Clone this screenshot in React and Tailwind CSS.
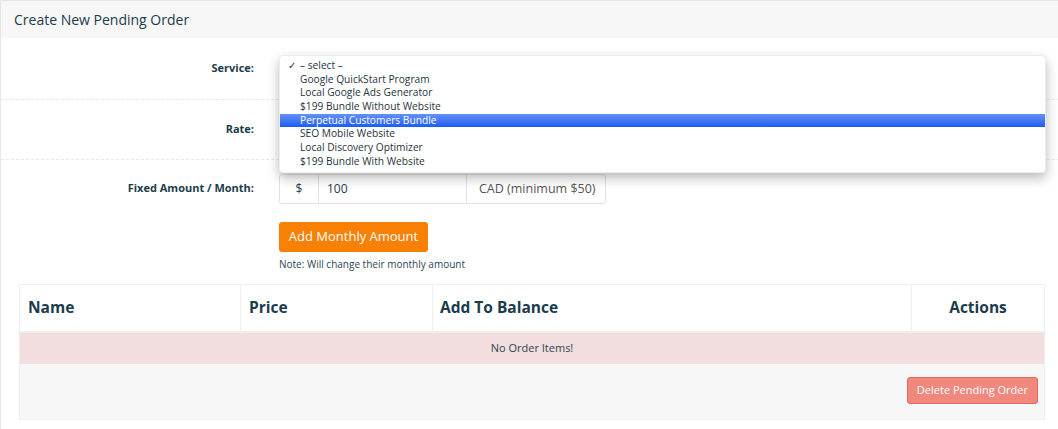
import React from 'react';

const options = [
    'Google QuickStart Program',
    'Local Google Ads Generator',
    '$199 Bundle Without Website',
    'Perpetual Customers Bundle',
    'SEO Mobile Website',
    'Local Discovery Optimizer',
    '$199 Bundle With Website',
];

export default function App() {
    return (
        <div className="w-[1058px] h-[429px] overflow-hidden bg-white text-[#1b3c4b]" style={{ fontFamily: '"Open Sans", sans-serif' }}>
            <div className="w-[1080px] border-l border-t border-[#e6e6e6] h-full">
                {/* Panel header */}
                <div className="h-[37px] bg-[#f7f7f7] flex items-center pl-[13px] text-[14px]">
                    Create New Pending Order
                </div>

                {/* Form */}
                <div className="relative">
                    <div className="flex items-center h-[62px] border-b border-dashed border-[#e8e8e8]">
                        <div className="w-[256px] pr-[3px] text-right text-[11px] font-bold">Service:</div>
                    </div>
                    <div className="flex items-center h-[60px] border-b border-dashed border-[#e8e8e8]">
                        <div className="w-[256px] pr-[3px] text-right text-[11px] font-bold">Rate:</div>
                        <div className="ml-[22px] w-[766px] h-[29px] border border-[#e3e3e3] rounded-[3px]" />
                    </div>

                    <div className="flex pt-[14px]">
                        <div className="w-[256px] pr-[3px] pt-[6px] text-right text-[11px] font-bold">Fixed Amount / Month:</div>
                        <div className="ml-[22px]">
                            <div className="flex h-[30px] w-[327px] border border-[#e3e3e3] rounded-[3px] text-[12px]">
                                <div className="w-[39px] flex items-center justify-center border-r border-[#e3e3e3]">$</div>
                                <div className="w-[148px] flex items-center pl-[8px] border-r border-[#e3e3e3]">100</div>
                                <div className="flex-1 flex items-center pl-[12px] text-[12.5px] text-[#555]">CAD (minimum $50)</div>
                            </div>
                            <button className="mt-[18px] h-[30px] w-[149px] rounded-[3px] bg-[#f88004] text-white text-[13px]">
                                Add Monthly Amount
                            </button>
                            <div className="mt-[5px] text-[10px] text-[#2b4753]">Note: Will change their monthly amount</div>
                        </div>
                    </div>

                    {/* Open select dropdown */}
                    <div className="absolute left-[278px] top-[17px] w-[767px] rounded-[4px] bg-white border border-[#ececec] shadow-[0_5px_12px_rgba(0,0,0,0.28)] py-[3px] text-[10.2px] font-medium text-[#1f3440]">
                        <div className="h-[13.7px] leading-[13.7px] flex">
                            <span className="w-[20px] pl-[8px] text-[10px]">✓</span>
                            <span>– select –</span>
                        </div>
                        {options.map((o, i) => (
                            <div
                                key={o}
                                className={`h-[13.7px] leading-[13.7px] pl-[20px] ${i === 3 ? 'bg-gradient-to-b from-[#6690f6] to-[#1a5cf1] text-white' : ''}`}
                            >
                                {o}
                            </div>
                        ))}
                    </div>
                </div>

                {/* Order items table */}
                <div className="ml-[18px] mt-[12px] w-[1026px] border border-[#eeeeee]">
                    <div className="flex h-[48px] text-[15.5px] font-bold border-b-2 border-[#eeeeee]">
                        <div className="w-[221px] flex items-center pl-[8px] border-r border-[#eeeeee]">Name</div>
                        <div className="w-[192px] flex items-center pl-[8px] border-r border-[#eeeeee]">Price</div>
                        <div className="w-[479px] flex items-center pl-[7px] border-r border-[#eeeeee]">Add To Balance</div>
                        <div className="flex-1 flex items-center justify-center">Actions</div>
                    </div>
                    <div className="h-[31px] bg-[#f2dede] flex items-center justify-center text-[11px] text-[#2b4753]">
                        No Order Items!
                    </div>
                    <div className="h-[55px] bg-[#f7f7f7] flex justify-end items-start pt-[13px] pr-[6px]">
                        <button className="h-[27px] px-[9px] rounded-[3px] bg-[#f0887e] border border-[#e9685c] text-white text-[11px]">
                            Delete Pending Order
                        </button>
                    </div>
                </div>
            </div>
        </div>
    );
}
